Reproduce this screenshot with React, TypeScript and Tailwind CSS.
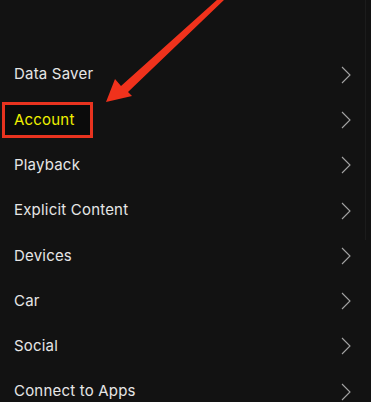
const items = [
  'Data Saver',
  'Account',
  'Playback',
  'Explicit Content',
  'Devices',
  'Car',
  'Social',
  'Connect to Apps',
]

function Chevron() {
  return (
    <svg width="10" height="18" viewBox="0 0 10 18" fill="none">
      <polyline points="1,1 9,9 1,17" stroke="#a3a3a3" strokeWidth="1.1" />
    </svg>
  )
}

export default function App() {
  return (
    <div
      className="relative w-[371px] h-[402px] overflow-hidden bg-[#121212]"
      style={{ fontFamily: 'Inter, "Liberation Sans", sans-serif' }}
    >
      {/* scrollbar track */}
      <div className="absolute right-[5px] top-0 h-[240px] w-px bg-[#1c1c1c]" />

      {/* highlight box */}
      <div className="absolute left-[2px] top-[102px] h-[36px] w-[91px] border-[3px] border-[#e8331f] bg-[#0b0b0b]" />

      <ul className="relative pt-[52px]">
        {items.map((item) => (
          <li key={item} className="flex h-[45.3px] items-center justify-between pl-[14px] pr-[20px]">
            <span
              className={`text-[15px] tracking-[0.2px] ${item === 'Account' ? 'text-[#f0f000]' : 'text-[#e6e6e6]'}`}
            >
              {item}
            </span>
            <Chevron />
          </li>
        ))}
      </ul>

      {/* arrow */}
      <svg className="absolute left-0 top-0" width="371" height="402" viewBox="0 0 371 402">
        <polygon
          points="106,102 115,79 121,86 218,-1 225,-1 128,92 132,96"
          fill="#f0321c"
        />
      </svg>
    </div>
  )
}
